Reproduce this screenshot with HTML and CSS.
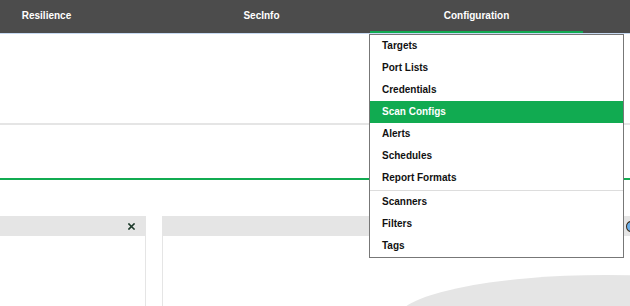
FILE: index.html
```html
<!DOCTYPE html>
<html>
<head>
<meta charset="utf-8">
<link rel="stylesheet" href="styles.css">
</head>
<body>
<header class="topbar">
  <nav class="menu-bar">
    <div class="menu-item">Resilience</div>
    <div class="menu-item">SecInfo</div>
    <div class="menu-item active">Configuration</div>
  </nav>
</header>
<div class="topbar-line"></div>
<section class="toolbar"></section>
<section class="title-area"></section>
<main class="dashboard">
  <div class="panel panel-left">
    <div class="panel-header">
      <svg class="close-icon" width="7" height="7" viewBox="0 0 7 7"><path d="M1 1L6 6M6 1L1 6" stroke="#1d3a2a" stroke-width="1.6" stroke-linecap="square"/></svg>
    </div>
    <div class="panel-body"></div>
  </div>
  <div class="panel panel-right">
    <div class="panel-header">
      <span class="info-icon"></span>
    </div>
    <div class="panel-body">
      <svg class="chart" width="477" height="70" viewBox="0 0 477 70"><ellipse cx="443" cy="84" rx="210" ry="45" fill="#e5e5e5"/></svg>
    </div>
  </div>
</main>
<ul class="dropdown">
  <li>Targets</li>
  <li>Port Lists</li>
  <li>Credentials</li>
  <li class="selected">Scan Configs</li>
  <li>Alerts</li>
  <li>Schedules</li>
  <li>Report Formats</li>
  <li class="sep">Scanners</li>
  <li>Filters</li>
  <li>Tags</li>
</ul>
</body>
</html>
```
FILE: styles.css
```css
html, body {
  margin: 0;
  padding: 0;
  width: 630px;
  height: 306px;
  overflow: hidden;
  background: #fff;
  font-family: "Liberation Sans", Arial, sans-serif;
}
.topbar {
  background: #4c4c4c;
  height: 33px;
  overflow: hidden;
}
.menu-bar {
  display: flex;
  gap: 2px;
  margin-left: -60px;
}
.menu-item {
  width: 213px;
  flex: none;
  height: 31px;
  line-height: 32px;
  text-align: center;
  color: #fff;
  font-size: 10px;
  font-weight: bold;
  border-bottom: 2px solid transparent;
}
.menu-item.active {
  border-bottom-color: #11ab51;
}
.topbar-line {
  height: 1px;
  background: #c7daf3;
}
.toolbar {
  height: 89px;
  border-bottom: 2px solid #e5e5e5;
}
.title-area {
  height: 53px;
  border-bottom: 2px solid #11ab51;
}
.dashboard {
  display: flex;
  padding-top: 36px;
  height: 90px;
  overflow: hidden;
}
.panel {
  display: flex;
  flex-direction: column;
}
.panel-left {
  width: 145px;
  border-right: 1px solid #e5e5e5;
  flex: none;
}
.panel-right {
  margin-left: 16px;
  width: 477px;
  flex: none;
  border-left: 1px solid #e5e5e5;
}
.panel-header {
  height: 20px;
  flex: none;
  background: #e5e5e5;
  display: flex;
  align-items: center;
  justify-content: flex-end;
}
.panel-left .panel-header {
  padding-right: 10px;
}
.close-icon {
  display: block;
}
.info-icon {
  width: 8px;
  height: 9px;
  border: 1px solid #3a2a1a;
  border-radius: 50%;
  background: #6aaee8;
  margin-right: 4px;
}
.panel-body {
  flex: 1;
  overflow: hidden;
}
.chart {
  display: block;
}
.dropdown {
  position: absolute;
  top: 34px;
  left: 369px;
  width: 253px;
  margin: 0;
  padding: 0;
  list-style: none;
  background: #fff;
  border: 1px solid #777;
  border-top-color: #777;
}
.dropdown li {
  height: 22px;
  line-height: 22px;
  padding-left: 12px;
  font-size: 10px;
  font-weight: bold;
  color: #111;
}
.dropdown li.selected {
  background: #11ab51;
  color: #fff;
}
.dropdown li.sep {
  border-top: 1px solid #ddd;
  margin-top: 1px;
}
```
